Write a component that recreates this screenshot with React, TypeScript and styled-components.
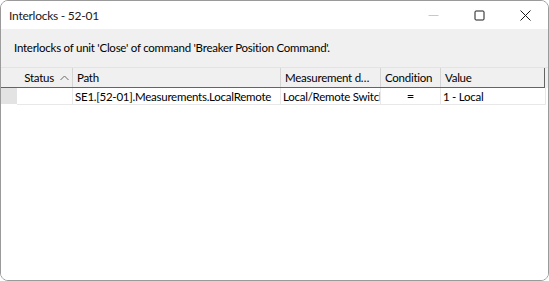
import React from "react";
import styled, { createGlobalStyle } from "styled-components";

const Global = createGlobalStyle`
  html, body { margin: 0; padding: 0; background: #ffffff; }
  * { box-sizing: border-box; }
  body { font-family: "Lato", "Liberation Sans", sans-serif; font-size: 11.5px; letter-spacing: -0.25px; color: #000; }
`;

const Window = styled.div`
  width: 549px;
  height: 281px;
  border: 1px solid #9a9a9a;
  border-radius: 8px;
  overflow: hidden;
  display: flex;
  flex-direction: column;
  background: #ffffff;
`;

const TitleBar = styled.div`
  height: 28px;
  display: flex;
  align-items: center;
  background: #ffffff;
  flex-shrink: 0;
`;

const Title = styled.div`
  flex: 1;
  padding-left: 8px;
  font-size: 12px;
  color: #1a1a1a;
`;

const CaptionButton = styled.div`
  width: 46px;
  height: 28px;
  display: flex;
  align-items: center;
  justify-content: center;
`;

const InfoBar = styled.div`
  height: 38px;
  background: #f0f0f0;
  display: flex;
  align-items: center;
  padding-left: 13px;
  padding-bottom: 1px;
  flex-shrink: 0;
`;

const Grid = styled.div`
  flex: 1;
  background: #ffffff;
  display: flex;
  flex-direction: column;
`;

const HeaderStrip = styled.div`
  display: flex;
  background: #f0f0f0;
  border-top: 1px solid #e3e3e3;
`;

const HeaderRow = styled.div`
  display: flex;
  height: 20px;
  border-bottom: 1px solid #646464;
`;

const HeaderFill = styled.div`
  flex: 1;
`;

const HeaderCell = styled.div<{ $w: number; $last?: boolean }>`
  width: ${(p) => p.$w}px;
  flex-shrink: 0;
  display: flex;
  align-items: center;
  padding-left: 4px;
  border-right: 1px solid ${(p) => (p.$last ? "#646464" : "#d5d5d5")};
  white-space: nowrap;
  overflow: hidden;
`;

const CornerCell = styled.div`
  width: 16px;
  flex-shrink: 0;
`;

const StatusHeader = styled(HeaderCell)`
  justify-content: flex-end;
  padding-right: 3px;
  gap: 6px;
`;

const DataRow = styled.div`
  display: flex;
  height: 17px;
  width: 545px;
`;

const RowHeader = styled.div`
  width: 16px;
  flex-shrink: 0;
  background: #e3e3e3;
  border-bottom: 1px solid #ffffff;
`;

const Cell = styled.div<{ $w: number; $center?: boolean; $last?: boolean }>`
  width: ${(p) => p.$w}px;
  flex-shrink: 0;
  display: flex;
  align-items: center;
  justify-content: ${(p) => (p.$center ? "center" : "flex-start")};
  padding-left: ${(p) => (p.$center ? 0 : 2)}px;
  border-right: 1px solid #e8e8e8;
  border-bottom: 1px solid #e8e8e8;
  white-space: nowrap;
  overflow: hidden;
  ${(p) => (p.$last ? "flex: 1;" : "")}
`;

const Eq = styled.span`
  font-size: 13px;
`;

const cols = [
  { key: "status", w: 56 },
  { key: "path", w: 208 },
  { key: "meas", w: 100 },
  { key: "cond", w: 60 },
  { key: "value", w: 104 },
];

export default function App() {
  return (
    <>
      <Global />
      <Window>
        <TitleBar>
          <Title>Interlocks - 52-01</Title>
          <CaptionButton>
            <svg width="11" height="11" viewBox="0 0 11 11">
              <line x1="0.5" y1="5.5" x2="10.5" y2="5.5" stroke="#c8c8c8" strokeWidth="1" />
            </svg>
          </CaptionButton>
          <CaptionButton>
            <svg width="11" height="11" viewBox="0 0 11 11">
              <rect x="1" y="1" width="9" height="9" rx="1" fill="none" stroke="#1a1a1a" strokeWidth="1" />
            </svg>
          </CaptionButton>
          <CaptionButton>
            <svg width="11" height="11" viewBox="0 0 11 11">
              <path d="M0.5 0.5 L10.5 10.5 M10.5 0.5 L0.5 10.5" stroke="#1a1a1a" strokeWidth="1" fill="none" />
            </svg>
          </CaptionButton>
        </TitleBar>
        <InfoBar>Interlocks of unit 'Close' of command 'Breaker Position Command'.</InfoBar>
        <Grid>
          <HeaderStrip>
            <HeaderRow>
              <CornerCell />
              <StatusHeader $w={cols[0].w}>
                <span>Status</span>
                <svg width="9" height="6" viewBox="0 0 9 6">
                  <path d="M0.5 5 L4.5 1 L8.5 5" stroke="#6a6a6a" strokeWidth="1" fill="none" />
                </svg>
              </StatusHeader>
              <HeaderCell $w={cols[1].w}>Path</HeaderCell>
              <HeaderCell $w={cols[2].w}>Measurement d…</HeaderCell>
              <HeaderCell $w={cols[3].w}>Condition</HeaderCell>
              <HeaderCell $w={cols[4].w} $last>Value</HeaderCell>
            </HeaderRow>
            <HeaderFill />
          </HeaderStrip>
          <DataRow>
            <RowHeader />
            <Cell $w={cols[0].w} />
            <Cell $w={cols[1].w}>SE1.[52-01].Measurements.LocalRemote</Cell>
            <Cell $w={cols[2].w}>Local/Remote Switch</Cell>
            <Cell $w={cols[3].w} $center>
              <Eq>=</Eq>
            </Cell>
            <Cell $w={cols[4].w} $last>1 - Local</Cell>
          </DataRow>
        </Grid>
      </Window>
    </>
  );
}
